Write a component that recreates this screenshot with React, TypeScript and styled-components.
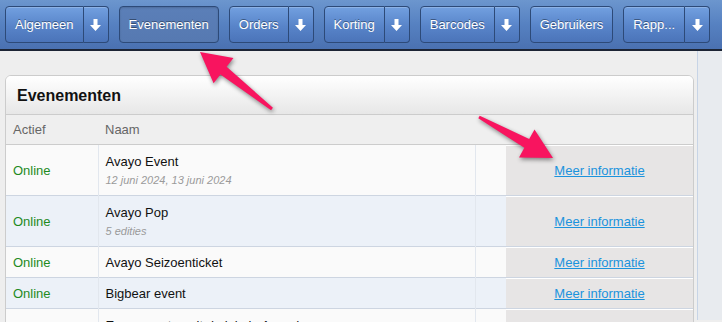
import React from "react";
import styled, { createGlobalStyle } from "styled-components";

const GlobalStyle = createGlobalStyle`
    html, body {
        margin: 0;
        padding: 0;
        background: #eeeeee;
        font-family: "Liberation Sans", Arial, sans-serif;
        overflow: hidden;
    }
`;

const Page = styled.div`
    position: relative;
    width: 722px;
    height: 322px;
    overflow: hidden;
    background: #eeeeee;
`;

const TopBar = styled.nav`
    display: flex;
    align-items: flex-start;
    gap: 10px;
    height: 51px;
    padding: 6px 0 0 5px;
    box-sizing: border-box;
    background: linear-gradient(to bottom, #6c96ce 0%, #5681c1 50%, #4a71b1 100%);
    border-bottom: 2px solid #1c2434;
`;

const Group = styled.div`
    display: flex;
`;

const NavButton = styled.button<{ $active?: boolean; $split?: boolean }>`
    height: 37px;
    padding: 0 9px;
    font-family: "Liberation Sans", Arial, sans-serif;
    font-size: 13px;
    color: #ffffff;
    text-shadow: 0 -1px 0 rgba(0, 0, 0, 0.4);
    border: 1px solid #2d4a78;
    border-radius: ${(p) => (p.$split ? "4px 0 0 4px" : "4px")};
    background: ${(p) =>
        p.$active
            ? "linear-gradient(to bottom, #5b7fb8, #5679b1)"
            : "linear-gradient(to bottom, #72a0e0 0%, #5884c9 55%, #4b74b9 100%)"};
    box-shadow: ${(p) => (p.$active ? "inset 0 1px 2px rgba(0,0,0,0.15)" : "inset 0 1px 0 rgba(255,255,255,0.2)")};
`;

const DropButton = styled.button`
    width: 25px;
    height: 37px;
    padding: 0;
    display: flex;
    align-items: center;
    justify-content: center;
    border: 1px solid #2d4a78;
    border-left: none;
    border-radius: 0 4px 4px 0;
    background: linear-gradient(to bottom, #72a0e0 0%, #5884c9 55%, #4b74b9 100%);
    box-shadow: inset 0 1px 0 rgba(255, 255, 255, 0.2);
`;

const Body = styled.div`
    display: flex;
    height: 269px;
`;

const Content = styled.main`
    flex: 1;
    padding: 24px 3px 0 5px;
`;

const SideStrip = styled.aside`
    width: 24px;
    background: #e8ebef;
    border-left: 1px solid #c7d4e6;
`;

const Panel = styled.section`
    border: 1px solid #cccccc;
    border-radius: 6px 6px 0 0;
    background: #fafafa;
    overflow: hidden;
`;

const PanelHeader = styled.h2`
    margin: 0;
    height: 38px;
    line-height: 40px;
    padding-left: 11px;
    font-size: 16px;
    font-weight: bold;
    color: #111111;
    background: linear-gradient(to bottom, #ffffff, #e7e7e7);
    border-bottom: 1px solid #cccccc;
`;

const Table = styled.table`
    width: 100%;
    border-collapse: collapse;
    table-layout: fixed;
    font-size: 13px;
`;

const HeadCell = styled.th`
    height: 29px;
    padding: 0 7px;
    text-align: left;
    font-weight: normal;
    color: #666666;
    background: #efefef;
    border-bottom: 1px solid #cccccc;
`;

const Row = styled.tr<{ $alt?: boolean }>`
    background: ${(p) => (p.$alt ? "#ecf1f8" : "#fafafa")};
    border-bottom: 1px solid #cdd5e1;
`;

const Cell = styled.td<{ $divider?: boolean; $tall?: boolean }>`
    padding: ${(p) => (p.$tall ? "9px 7px 8px" : "8px 7px 7px")};
    line-height: 15px;
    vertical-align: middle;
    color: #111111;
    border-left: ${(p) => (p.$divider ? "1px solid #e2e7ee" : "none")};
`;

const StatusCell = styled(Cell)`
    color: #1f8a1f;
`;

const InfoCell = styled.td`
    text-align: center;
    vertical-align: middle;
    background: #e7e5e5;
    box-shadow: inset 0 1px 0 #ffffff;
`;

const Sub = styled.div`
    margin-top: 4px;
    font-size: 11px;
    line-height: 14px;
    font-style: italic;
    color: #9a9a9a;
`;

const InfoLink = styled.a`
    color: #1b93dd;
    text-decoration: underline;
    font-size: 13px;
`;

const Overlay = styled.svg`
    position: absolute;
    top: 0;
    left: 0;
    pointer-events: none;
    filter: drop-shadow(1px 2px 2px rgba(0, 0, 0, 0.45));
`;

const DownIcon = () => (
    <svg width="11" height="12" viewBox="0 0 11 12">
        <path d="M3.5 0h4v6h3.5l-5.5 6-5.5-6h3.5z" fill="#ffffff" />
    </svg>
);

const arrowPoints = (x1: number, y1: number, x2: number, y2: number) => {
    const dx = x2 - x1;
    const dy = y2 - y1;
    const len = Math.hypot(dx, dy);
    const ux = dx / len;
    const uy = dy / len;
    const nx = -uy;
    const ny = ux;
    const head = 30;
    const bx = x2 - ux * head;
    const by = y2 - uy * head;
    const pts = [
        [x1 + nx * 1.5, y1 + ny * 1.5],
        [bx + nx * 5, by + ny * 5],
        [bx + nx * 16, by + ny * 16],
        [x2, y2],
        [bx - nx * 16, by - ny * 16],
        [bx - nx * 5, by - ny * 5],
        [x1 - nx * 1.5, y1 - ny * 1.5],
    ];
    return pts.map((p) => p.join(",")).join(" ");
};

const navItems = [
    { label: "Algemeen", split: true },
    { label: "Evenementen", active: true },
    { label: "Orders", split: true },
    { label: "Korting", split: true },
    { label: "Barcodes", split: true },
    { label: "Gebruikers" },
    { label: "Rapp...", split: true },
];

const events = [
    { name: "Avayo Event", sub: "12 juni 2024, 13 juni 2024" },
    { name: "Avayo Pop", sub: "5 edities" },
    { name: "Avayo Seizoenticket" },
    { name: "Bigbear event" },
    { name: "Evenementen uit de lokale Agenda", sub: "3 edities" },
];

const App: React.FC = () => {
    return (
        <Page>
            <GlobalStyle />
            <TopBar>
                {navItems.map((item) => (
                    <Group key={item.label}>
                        <NavButton $active={item.active} $split={item.split}>
                            {item.label}
                        </NavButton>
                        {item.split && (
                            <DropButton>
                                <DownIcon />
                            </DropButton>
                        )}
                    </Group>
                ))}
            </TopBar>
            <Body>
                <Content>
                    <Panel>
                        <PanelHeader>Evenementen</PanelHeader>
                        <Table>
                            <colgroup>
                                <col style={{ width: 92 }} />
                                <col style={{ width: 377 }} />
                                <col style={{ width: 31 }} />
                                <col style={{ width: 187 }} />
                            </colgroup>
                            <thead>
                                <tr>
                                    <HeadCell>Actief</HeadCell>
                                    <HeadCell>Naam</HeadCell>
                                    <HeadCell />
                                    <HeadCell />
                                </tr>
                            </thead>
                            <tbody>
                                {events.map((ev, i) => (
                                    <Row key={ev.name} $alt={i % 2 === 1}>
                                        <StatusCell $tall={!!ev.sub}>Online</StatusCell>
                                        <Cell $divider $tall={!!ev.sub}>
                                            {ev.name}
                                            {ev.sub && <Sub>{ev.sub}</Sub>}
                                        </Cell>
                                        <Cell $divider />
                                        <InfoCell>
                                            <InfoLink href="#">Meer informatie</InfoLink>
                                        </InfoCell>
                                    </Row>
                                ))}
                            </tbody>
                        </Table>
                    </Panel>
                </Content>
                <SideStrip />
            </Body>
            <Overlay width="722" height="322">
                <polygon points={arrowPoints(272, 109, 200, 52)} fill="#f8145f" />
                <polygon points={arrowPoints(479, 117, 553, 158)} fill="#f8145f" />
            </Overlay>
        </Page>
    );
};

export default App;
